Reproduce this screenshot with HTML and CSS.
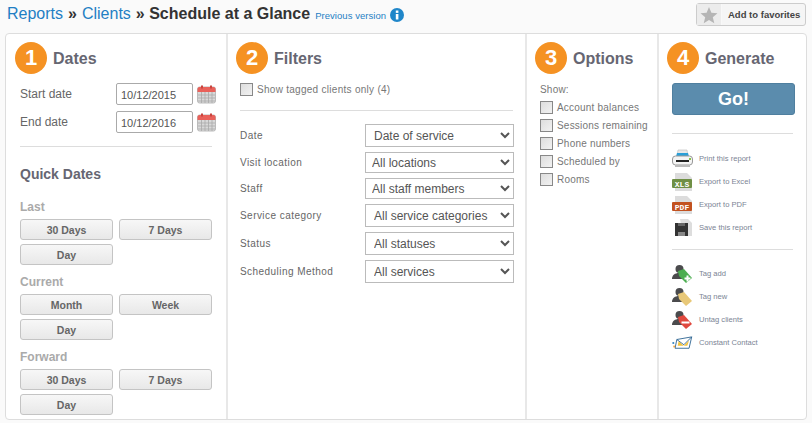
FILE: index.html
```html
<!DOCTYPE html>
<html lang="en">
<head>
    <meta charset="UTF-8">
    <title>Schedule at a Glance</title>
    <link rel="stylesheet" href="styles.css">
</head>
<body>
    <svg class="defs" width="0" height="0">
        <symbol id="person" viewBox="0 0 20 20">
            <circle cx="7.500" cy="5" r="4" fill="#4b4b4d"/>
            <path d="M0 15c0-4 3-6 7-6s7 2 7 6z" fill="#4b4b4d"/>
        </symbol>
        <symbol id="cal" viewBox="0 0 19 19">
            <rect x="0.500" y="2" width="18" height="16" rx="2" fill="#d9d9d9" stroke="#bbb"/>
            <path d="M0.500 7V4q0-2 2-2h14q2 0 2 2v3z" fill="#e9615a"/>
            <rect x="4" y="0.500" width="2" height="3" fill="#c9453e"/>
            <rect x="13" y="0.500" width="2" height="3" fill="#c9453e"/>
            <path d="M1 10h17M1 13h17M1 16h17M4.500 7v11M8 7v11M11.500 7v11M15 7v11" stroke="#aaa" stroke-width="0.8"/>
        </symbol>
    </svg>

    <div class="top">
        <div class="crumbs">
            <a class="crumb">Reports</a> <b>»</b> <a class="crumb">Clients</a> <b>» Schedule at a Glance</b>
            <a class="prev">Previous version</a>
            <svg class="info" width="14" height="14" viewBox="0 0 14 14">
                <circle cx="7" cy="7" r="7" fill="#1f86c9"/>
                <rect x="5.800" y="6" width="2.600" height="5.500" fill="#fff"/>
                <rect x="5.800" y="2.500" width="2.600" height="2.400" fill="#fff"/>
            </svg>
        </div>
        <div class="fav">
            <span class="fav-star">
                <svg width="18" height="18" viewBox="0 0 18 18"><path d="M9 1l2.400 5.700 6.100.5-4.700 4 1.500 6L9 14l-5.300 3.200 1.500-6-4.700-4 6.100-.5z" fill="#b5b5b5"/></svg>
            </span>
            <span class="fav-text">Add to favorites</span>
        </div>
    </div>

    <div class="panel">
        <div class="col col-dates">
            <div class="head"><span class="num">1</span><h2>Dates</h2></div>
            <div class="date-row">
                <label>Start date</label>
                <input class="date" type="text" value="10/12/2015">
                <svg class="cal" width="19" height="19"><use href="#cal"/></svg>
            </div>
            <div class="date-row">
                <label>End date</label>
                <input class="date" type="text" value="10/12/2016">
                <svg class="cal" width="19" height="19"><use href="#cal"/></svg>
            </div>
            <hr class="line line-dates">
            <h3>Quick Dates</h3>
            <h4 class="first">Last</h4>
            <div class="quick">
                <button>30 Days</button><button>7 Days</button><button>Day</button>
            </div>
            <h4>Current</h4>
            <div class="quick">
                <button>Month</button><button>Week</button><button>Day</button>
            </div>
            <h4>Forward</h4>
            <div class="quick">
                <button>30 Days</button><button>7 Days</button><button>Day</button>
            </div>
        </div>

        <div class="col col-filters">
            <div class="head"><span class="num">2</span><h2>Filters</h2></div>
            <label class="check tagged"><span class="box"></span>Show tagged clients only (4)</label>
            <hr class="line line-filters">
            <div class="filter f1"><label>Date</label><select><option>Date of service</option></select></div>
            <div class="filter f2"><label>Visit location</label><select><option>All locations</option></select></div>
            <div class="filter f2"><label>Staff</label><select><option>All staff members</option></select></div>
            <div class="filter f1"><label>Service category</label><select><option>All service categories</option></select></div>
            <div class="filter f1"><label>Status</label><select><option>All statuses</option></select></div>
            <div class="filter f1"><label>Scheduling Method</label><select><option>All services</option></select></div>
        </div>

        <div class="col col-options">
            <div class="head"><span class="num">3</span><h2>Options</h2></div>
            <div class="show">Show:</div>
            <label class="check"><span class="box"></span>Account balances</label>
            <label class="check"><span class="box"></span>Sessions remaining</label>
            <label class="check"><span class="box"></span>Phone numbers</label>
            <label class="check"><span class="box"></span>Scheduled by</label>
            <label class="check"><span class="box"></span>Rooms</label>
        </div>

        <div class="col col-generate">
            <div class="head"><span class="num">4</span><h2>Generate</h2></div>
            <button class="go">Go!</button>
            <hr class="line line-go">
            <a class="action">
                <svg width="21" height="20" viewBox="0 0 21 20">
                    <path d="M6 1h9l1 6H5z" fill="#e8e8e8" stroke="#bbb" stroke-width=".6"/>
                    <path d="M5 4h11l1 4H4z" fill="#2a9fd8"/>
                    <rect x="0.500" y="7" width="20" height="9" rx="3" fill="#f4f4f4" stroke="#999"/>
                    <rect x="4" y="11" width="13" height="2" fill="#222"/>
                    <rect x="3" y="16" width="15" height="2" fill="#bbb"/>
                    <rect x="17" y="9" width="2" height="2" fill="#8ac24a"/>
                </svg>
                Print this report
            </a>
            <a class="action">
                <svg width="21" height="20" viewBox="0 0 21 20">
                    <path d="M3 1h12l5 5v13H3z" fill="#dcdcdc"/>
                    <rect x="0" y="7" width="20" height="9" rx="1" fill="#6f8f45"/>
                    <text x="10" y="14.500" class="ico-text">XLS</text>
                </svg>
                Export to Excel
            </a>
            <a class="action">
                <svg width="21" height="20" viewBox="0 0 21 20">
                    <path d="M3 1h12l5 5v13H3z" fill="#dcdcdc"/>
                    <rect x="0" y="7" width="20" height="9" rx="1" fill="#c2511f"/>
                    <text x="10" y="14.500" class="ico-text">PDF</text>
                </svg>
                Export to PDF
            </a>
            <a class="action">
                <svg width="21" height="20" viewBox="0 0 21 20">
                    <path d="M8 1h8l4 4v13h-9z" fill="#ddd"/>
                    <path d="M3 5h13v13H3z" fill="#333"/>
                    <rect x="6" y="14" width="7" height="4" fill="#888"/>
                    <rect x="6" y="5" width="7" height="3" fill="#666"/>
                </svg>
                Save this report
            </a>
            <hr class="line line-tags">
            <a class="action tag">
                <svg width="21" height="20" viewBox="0 0 21 20">
                    <use href="#person" width="20" height="20"/>
                    <path d="M6 7l6-2 8 9-6 5-7-7z" fill="#4cae50"/>
                    <path d="M12.500 14.500h6M15.500 11.500v6" stroke="#fff" stroke-width="2"/>
                </svg>
                Tag add
            </a>
            <a class="action tag">
                <svg width="21" height="20" viewBox="0 0 21 20">
                    <use href="#person" width="20" height="20"/>
                    <path d="M6 7l6-2 8 9-6 5-7-7z" fill="#e8c878"/>
                </svg>
                Tag new
            </a>
            <a class="action tag">
                <svg width="21" height="20" viewBox="0 0 21 20">
                    <use href="#person" width="20" height="20"/>
                    <path d="M6 7l6-2 8 9-6 5-7-7z" fill="#e0483e"/>
                    <path d="M9.500 12.500h8" stroke="#fff" stroke-width="2"/>
                </svg>
                Untag clients
            </a>
            <a class="action tag">
                <svg width="21" height="14" viewBox="0 0 23 16">
                    <path d="M5 4l17-3-3 13H3z" fill="#fff" stroke="#27608f"/>
                    <path d="M5 4l8 6 9-9" fill="none" stroke="#27608f"/>
                    <path d="M7 6l6 5 6-6-2 6H6z" fill="#f3c33c"/>
                    <rect x="0" y="7" width="2" height="2" fill="#2a7fc0"/>
                    <rect x="1" y="11" width="2" height="2" fill="#f3a33c"/>
                </svg>
                Constant Contact
            </a>
        </div>
    </div>
</body>
</html>
```

FILE: styles.css
```css
html, body {
    margin: 0;
    height: 423px;
    overflow: hidden;
    background-color: #fafafa;
    font-family: "Liberation Sans", Arial, sans-serif;
    color: #666;
}
.defs {
    display: block;
    height: 0;
}
.top {
    display: flex;
    justify-content: space-between;
    height: 33px;
    padding: 2px 6px 0 7px;
    box-sizing: border-box;
}
.crumbs {
    display: flex;
    align-items: center;
    gap: 5px;
    height: 23px;
    font-size: 16px;
    color: #333;
}
.crumb {
    color: #1f7fc4;
}
.prev {
    font-size: 9.500px;
    color: #1f7fc4;
    letter-spacing: 0.05px;
    padding-top: 3px;
}
.info {
    margin: 2px 0 0 -1px;
}
.fav {
    display: flex;
    width: 110px;
    height: 23px;
    margin-top: 1px;
    box-sizing: border-box;
    border: 1px solid #ccc;
    border-radius: 3px;
    background-color: #f5f5f5;
}
.fav-star {
    display: flex;
    align-items: center;
    justify-content: center;
    width: 24px;
    background-color: #ececec;
    border-right: 1px solid #f8f8f8;
}
.fav-text {
    flex: 1;
    padding-left: 6px;
    font-size: 9.500px;
    font-weight: bold;
    line-height: 21px;
    color: #444;
}

.panel {
    display: flex;
    width: 802px;
    height: 387px;
    margin-left: 5px;
    box-sizing: border-box;
    background-color: #fff;
    border: 1px solid #ddd;
    border-radius: 4px;
}
.col {
    box-sizing: border-box;
    padding-top: 8px;
    border-right: 2px solid #e8e8e8;
}
.col-dates { width: 222px; padding-left: 9px; }
.col-filters { width: 299px; padding-left: 12px; }
.col-options { width: 132px; padding-left: 8px; }
.col-generate { flex: 1; padding-left: 8px; border-right: none; }

.head {
    display: flex;
    align-items: center;
    gap: 6px;
    height: 32px;
}
.num {
    width: 32px;
    height: 32px;
    border-radius: 50%;
    background-color: #f59223;
    color: #fff;
    font-size: 22px;
    font-weight: bold;
    line-height: 32px;
    text-align: center;
}
.col-filters .head {
    margin-left: -4px;
}
h2 {
    margin: 2px 0 0;
    font-size: 16px;
    color: #666672;
}
.line {
    height: 0;
    margin: 0;
    border: none;
    border-top: 1px solid #ddd;
}

/* dates */
.col-dates .head { margin-bottom: 9px; }
.date-row {
    display: flex;
    align-items: center;
    height: 22px;
    margin: 0 0 6px 5px;
    font-size: 12px;
}
.date-row label {
    width: 96px;
}
.date {
    width: 77px;
    height: 22px;
    box-sizing: border-box;
    padding: 2px 4px 0;
    border: 1px solid #aaa;
    border-radius: 2px;
    font: 11px "Liberation Sans", Arial, sans-serif;
    color: #555;
}
.cal {
    margin-left: 4px;
}
.line-dates {
    width: 192px;
    margin: 13px 0 0 5px;
}
h3 {
    margin: 19px 0 0 5px;
    font-size: 14px;
    line-height: 16px;
    color: #666672;
}
h4 {
    margin: 10px 0 5px 5px;
    font-size: 12px;
    line-height: 14px;
    color: #aaa;
}
h4.first {
    margin-top: 18px;
}
.quick {
    display: grid;
    grid-template-columns: 93px 93px;
    gap: 4px 6px;
    margin-left: 5px;
}
.quick button {
    height: 21px;
    padding: 0;
    border: 1px solid #c4c4c4;
    border-radius: 3px;
    background: linear-gradient(#f7f7f7, #e8e8e8);
    font: bold 10.500px "Liberation Sans", Arial, sans-serif;
    color: #666;
}

/* filters */
.check {
    display: flex;
    align-items: center;
    gap: 4px;
    height: 18px;
    font-size: 10px;
    letter-spacing: 0.28px;
    color: #777;
}
.box {
    flex: none;
    width: 13px;
    height: 13px;
    box-sizing: border-box;
    border: 1px solid #888;
    background: linear-gradient(135deg, #ddd, #f2f2f2);
}
.tagged {
    margin-top: 6px;
}
.line-filters {
    margin-top: 12px;
    width: 273px;
}
.filter {
    display: flex;
    align-items: center;
    justify-content: space-between;
    width: 274px;
    font-size: 10px;
    letter-spacing: 0.45px;
    color: #666;
}
.filter select {
    width: 149px;
    height: 100%;
    background-color: #fff;
    border: 1px solid #bbb;
    font: 12px "Liberation Sans", Arial, sans-serif;
    letter-spacing: 0;
    color: #555;
}
.filter.f1 { height: 23px; margin-bottom: 5px; }
.filter.f2 { height: 21px; margin-bottom: 5px; }
.filter.f1 select { padding: 0 4px; }
.filter.f2 select { padding: 0 2px; }
.line-filters + .filter { margin-top: 13px; }

/* options */
.show {
    margin: 10px 0 2px 5px;
    font-size: 10px;
    letter-spacing: 0.2px;
    line-height: 12px;
    color: #777;
}
.col-options .check {
    margin-left: 5px;
    letter-spacing: 0.2px;
}

/* generate */
.go {
    display: block;
    width: 123px;
    height: 32px;
    margin: 9px 0 0 5px;
    border: 1px solid #4f7f9f;
    border-radius: 3px;
    background-color: #5b8cad;
    color: #fff;
    font: bold 18px "Liberation Sans", Arial, sans-serif;
}
.line-go {
    width: 121px;
    margin: 18px 0 13px 5px;
}
.line-tags {
    width: 121px;
    margin: 10px 0 12px 5px;
}
.action {
    display: flex;
    align-items: center;
    gap: 6px;
    height: 23px;
    margin-left: 5px;
    font-size: 7.600px;
    color: #7b8494;
}
.action svg {
    flex: none;
}
.ico-text {
    font: bold 8px "Liberation Mono", monospace;
    fill: #fff;
    text-anchor: middle;
}
```
